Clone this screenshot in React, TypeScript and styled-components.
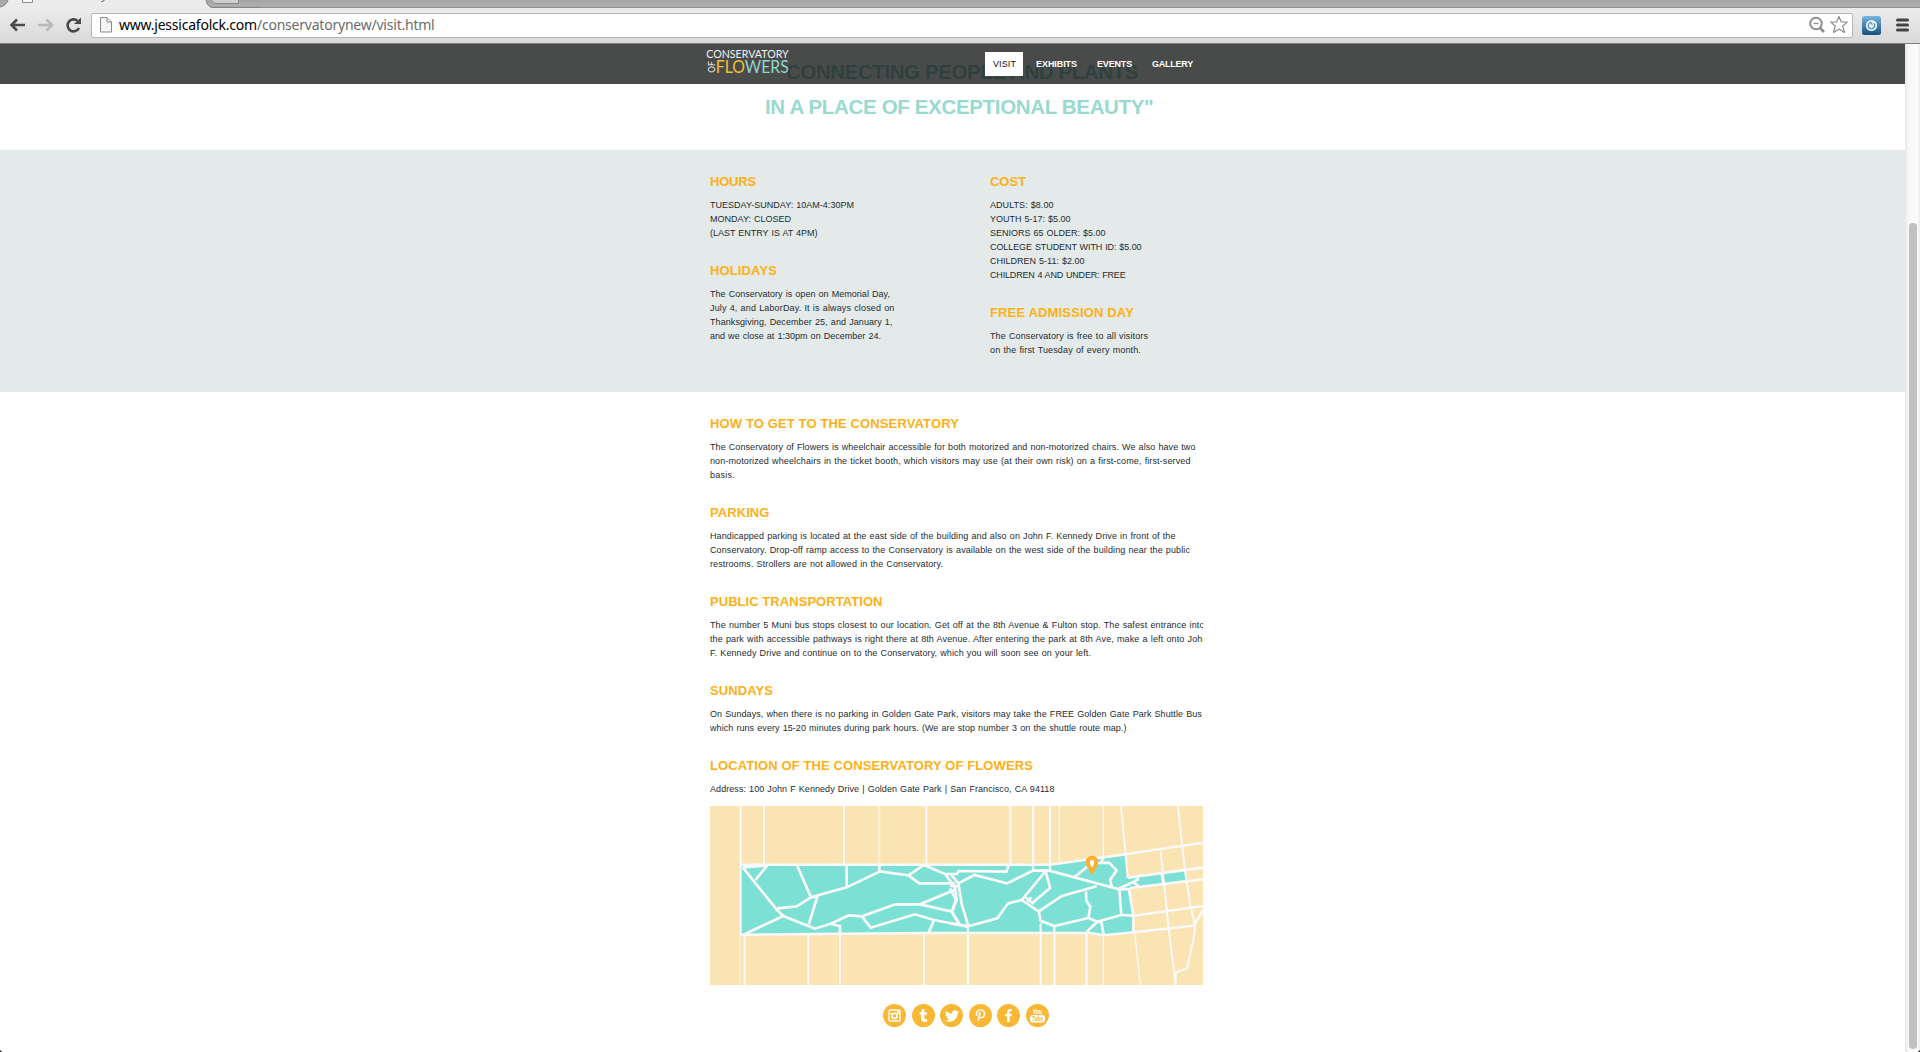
import React, { useLayoutEffect, useRef, useState } from "react";
import styled, { createGlobalStyle } from "styled-components";
import { FaTumblr, FaTwitter, FaPinterestP, FaFacebookF } from "react-icons/fa";

const GlobalStyle = createGlobalStyle`
  html, body { margin: 0; padding: 0; background: #111; overflow: hidden; }
  * { box-sizing: border-box; }
  body { font-family: "Liberation Sans", Arial, sans-serif; }
`;

const Window = styled.div`
  display: flex;
  flex-direction: column;
  width: 1920px;
  height: 1052px;
  overflow: hidden;
  background: #fff;
  border-radius: 0 0 4px 4px;
`;

const TabStrip = styled.div`
  display: flex;
  height: 8px;
  flex: none;
  background: linear-gradient(#a5a5a5, #b0b0b0 80%, #8f8f8f 88%);
`;

const TabArt = styled.svg`
  display: block;
`;

const Toolbar = styled.div`
  display: flex;
  align-items: center;
  height: 36px;
  flex: none;
  padding: 0 11px 1px 9px;
  background: linear-gradient(#ececec, #d9d9d9);
  border-bottom: 1px solid #7b7d7b;
`;

const Nav = styled.svg`
  display: block;
  flex: none;
`;

const AddressBar = styled.div`
  display: flex;
  align-items: center;
  flex: 1;
  height: 25px;
  margin-left: 9px;
  padding: 0 4px 0 8px;
  background: #fff;
  border: 1px solid #b4b4b4;
  border-radius: 2px;
`;

const Url = styled.div`
  flex: 1;
  margin-left: 7px;
  font: 14px/20px "Noto Sans", "Open Sans", sans-serif;
  color: #6b6b6b;
  white-space: nowrap;
`;

const Host = styled.span`
  color: #000;
`;

const Extras = styled.div`
  display: flex;
  align-items: center;
  gap: 15px;
  margin-left: 9px;
`;

const Viewport = styled.div`
  display: flex;
  flex: 1;
  min-height: 0;
`;

const Page = styled.main`
  position: relative;
  width: 1905px;
  overflow: hidden;
  background: #fff;
`;

const ScrollTrack = styled.div`
  width: 15px;
  padding: 179px 3px 3px 4px;
  background: linear-gradient(90deg, #e6e6e6, #f7f7f7 20%, #fcfcfc 80%, #ededed);
`;

const ScrollThumb = styled.div`
  width: 8px;
  height: 826px;
  border-radius: 4px;
  background: #c1c1c1;
`;

const SiteHeader = styled.header`
  position: absolute;
  inset: 0 0 auto 0;
  display: flex;
  height: 40px;
  padding-left: 705px;
  background: rgba(10, 12, 11, 0.74);
`;

const Menu = styled.nav`
  display: flex;
  gap: 20px;
  margin: 8px 0 0 196px;
  height: 24px;
`;

const MenuItem = styled.a<{ $active?: boolean }>`
  padding: ${(p) => (p.$active ? "0 7px 0 8px" : "0")};
  margin-right: ${(p) => (p.$active ? -7 : 0)}px;
  font-size: 9px;
  line-height: 24px;
  font-weight: ${(p) => (p.$active ? 400 : 700)};
  color: ${(p) => (p.$active ? "#111" : "#fff")};
  background: ${(p) => (p.$active ? "#fff" : "transparent")};
`;

const Motto = styled.h1`
  height: 106px;
  margin: 0;
  padding-top: 10px;
  font-size: 20.5px;
  line-height: 35px;
  color: #98d9d0;
`;

const MottoLine = styled.div<{ $indent: number }>`
  padding-left: ${(p) => p.$indent}px;
`;

const Band = styled.section`
  height: 242px;
  background: #e4eae9;
`;

const Container = styled.div`
  display: flex;
  width: 493px;
  margin-left: 710px;
  padding-top: 24px;
`;

const Column = styled.div<{ $w: number }>`
  width: ${(p) => p.$w}px;
  overflow: hidden;
`;

const Title = styled.h3`
  margin: 0 0 8px;
  font-size: 13px;
  line-height: 16px;
  color: #ffb016;
`;

const Copy = styled.p`
  margin: 0 0 23px;
  font-size: 9px;
  line-height: 14px;
  word-spacing: 0.5px;
  color: #1d2c30;
`;

const Address = styled(Copy)`
  margin-bottom: 10px;
`;

const MapArt = styled.svg`
  display: block;
`;

const Social = styled.div`
  display: flex;
  gap: 5.5px;
  margin: 19px 0 0 883px;
`;

const Badge = styled.a`
  display: flex;
  align-items: center;
  justify-content: center;
  width: 23px;
  height: 23px;
  border-radius: 50%;
  background: #fab733;
  color: #fff;
`;

const Row = styled.span`
  display: block;
  white-space: nowrap;
`;

const Measured = styled.span`
  display: inline-block;
  vertical-align: top;
`;

/* Tracks a line of text out (or in) so that it fills the measure it is given. */
function Fit({ width, children }: { width: number; children: React.ReactNode }) {
  const ref = useRef<HTMLSpanElement>(null);
  const [tracking, setTracking] = useState(0);
  useLayoutEffect(() => {
    const el = ref.current;
    if (!el) return;
    const count = (el.textContent ?? "").length;
    setTracking((width - el.getBoundingClientRect().width) / count);
  }, [width]);
  return (
    <Row>
      <Measured ref={ref} style={{ letterSpacing: tracking }}>{children}</Measured>
    </Row>
  );
}

type LineData = [string, number];
interface BlockData {
  title: LineData;
  lines: LineData[];
}

const left: BlockData[] = [
  {
    title: ["HOURS", 46],
    lines: [["TUESDAY-SUNDAY: 10AM-4:30PM", 144], ["MONDAY: CLOSED", 81], ["(LAST ENTRY IS AT 4PM)", 107.5]],
  },
  {
    title: ["HOLIDAYS", 67],
    lines: [
      ["The Conservatory is open on Memorial Day,", 180],
      ["July 4, and LaborDay. It is always closed on", 184.5],
      ["Thanksgiving, December 25, and January 1,", 182.5],
      ["and we close at 1:30pm on December 24.", 171],
    ],
  },
];

const right: BlockData[] = [
  {
    title: ["COST", 36],
    lines: [
      ["ADULTS: $8.00", 63.5],
      ["YOUTH 5-17: $5.00", 80.5],
      ["SENIORS 65 OLDER: $5.00", 115.5],
      ["COLLEGE STUDENT WITH ID: $5.00", 151.5],
      ["CHILDREN 5-11: $2.00", 94.5],
      ["CHILDREN 4 AND UNDER: FREE", 135.5],
    ],
  },
  {
    title: ["FREE ADMISSION DAY", 144],
    lines: [["The Conservatory is free to all visitors", 158], ["on the first Tuesday of every month.", 151]],
  },
];

const directions: BlockData[] = [
  {
    title: ["HOW TO GET TO THE CONSERVATORY", 249],
    lines: [
      ["The Conservatory of Flowers is wheelchair accessible for both motorized and non-motorized chairs. We also have two", 485.5],
      ["non-motorized wheelchairs in the ticket booth, which visitors may use (at their own risk) on a first-come, first-served", 480.5],
      ["basis.", 25],
    ],
  },
  {
    title: ["PARKING", 59.5],
    lines: [
      ["Handicapped parking is located at the east side of the building and also on John F. Kennedy Drive in front of the", 465.5],
      ["Conservatory. Drop-off ramp access to the Conservatory is available on the west side of the building near the public", 480],
      ["restrooms. Strollers are not allowed in the Conservatory.", 233],
    ],
  },
  {
    title: ["PUBLIC TRANSPORTATION", 172.5],
    lines: [
      ["The number 5 Muni bus stops closest to our location. Get off at the 8th Avenue & Fulton stop. The safest entrance into", 494.5],
      ["the park with accessible pathways is right there at 8th Avenue. After entering the park at 8th Ave, make a left onto John", 497.5],
      ["F. Kennedy Drive and continue on to the Conservatory, which you will soon see on your left.", 381],
    ],
  },
  {
    title: ["SUNDAYS", 63],
    lines: [
      ["On Sundays, when there is no parking in Golden Gate Park, visitors may take the FREE Golden Gate Park Shuttle Bus,", 494.5],
      ["which runs every 15-20 minutes during park hours. (We are stop number 3 on the shuttle route map.)", 416.5],
    ],
  },
];

function Block({ title, lines }: BlockData) {
  return (
    <>
      <Title><Fit width={title[1]}>{title[0]}</Fit></Title>
      <Copy>
        {lines.map(([text, width]) => (
          <Fit key={text} width={width}>{text}</Fit>
        ))}
      </Copy>
    </>
  );
}

function Logo() {
  return (
    <svg width="84" height="40" viewBox="0 0 84 40" fontFamily="Lato, sans-serif">
      <text x="1.2" y="14.4" fontSize="10.6" fill="#f2f2f2" textLength="82.5" lengthAdjust="spacingAndGlyphs">CONSERVATORY</text>
      <text transform="translate(9.5 28.8) rotate(-90)" fontSize="10" fill="#f2f2f2" textLength="11.5" lengthAdjust="spacingAndGlyphs">OF</text>
      <text x="10.8" y="28.8" fontSize="16.8" textLength="73" lengthAdjust="spacingAndGlyphs">
        <tspan fill="#f0c030">FLO</tspan><tspan fill="#93d6cc">WERS</tspan>
      </text>
    </svg>
  );
}

function ParkMap() {
  return (
    <MapArt width="493" height="179" viewBox="30 18 1479 537" fill="none" stroke="#fafafa" strokeWidth="8">
      <rect x="30" y="18" width="1479" height="537" fill="#fbe4b4" stroke="none" />
      <path d="M123 195H1048L1275 167L1283 233L1455 213V240L1289 265L1301 395L1212 406L1130 398L682 399L123 403Z" fill="#7ce0d5" stroke="none" />
      <path d="M119 405V555" stroke="#fcefd6" strokeWidth="4" />
      <path d="M122 18V405M192 18V192M432 18V192M679 18V192M134 405V555M325 405V555M420 375V555M672 400V555" strokeWidth="6" />
      <path d="M538 18V192" stroke="#fcf0d8" strokeWidth="6" />
      <path d="M120 194H1050L1275 163L1509 128M120 404L682 399H1170L1212 406L1301 397L1482 377L1509 330" strokeWidth="7.5" />
      <path d="M128 202L202 196L166 240M128 202L232 331L250 348L345 386L392 371L446 346L486 349L586 313H660L765 269M135 402L250 348M232 325L290 319L333 292L291 196M326 373L352 290L333 292L440 262L540 214L625 226L672 195L735 222L765 262L770 300L756 335L780 375M440 262V195M538 195V214M625 226L658 250H765M392 371L420 379V400M486 349L512 383L645 343L702 360L780 375L804 380M702 360L686 398M660 313L756 335" />
      <g transform="translate(750 0)">
        <path d="M181 18V192M249 18V212M300 18V212M54 375V555M272 370V555M313 378V555M410 397V555" strokeWidth="6.5" />
        <path d="M328 18V184M460 18V168M460 405V555M554 397L571 555" strokeWidth="4" />
        <path d="M513 18L527 165L533 233M684 18L705 213L722 320L735 378L733 405L711 505L677 518V555M632 155L656 385L677 555" strokeWidth="6" />
        <path d="M533 233L759 203M540 264L759 238M546 348L759 318" strokeWidth="8" />
        <path d="M-15 222H20L26 213L169 215L177 194M0 220L25 250L35 312L54 375M0 258H25M25 250L73 225L171 250L249 212H298L505 267L566 238M0 265L18 300L5 335L25 370M0 370L54 379L142 355L174 310L215 300L287 213L300 264L247 309L223 289M215 300L266 334L336 288L440 259M408 274L409 302L421 320L415 354L313 378L272 362L266 334M232 305L244 292M415 354L442 365L514 345L550 347L537 267L508 268L514 345M410 395L442 365L454 366L461 405M550 347V397M375 230L425 189L452 189L461 172M452 189L477 188L500 211L481 239L485 260M566 258L550 247L566 235M635 220L640 250" />
        <path d="M426 226L411 200Q403 183 411 174Q426 160 441 174Q449 183 441 200Z" fill="#fbb030" stroke="none" />
        <path d="M426 203L420 192Q418 180 426 179Q434 180 432 192Z" fill="#fff" stroke="none" />
      </g>
    </MapArt>
  );
}

function InstagramGlyph() {
  return (
    <svg width="13" height="13" viewBox="0 0 13 13" fill="none" stroke="#fff">
      <rect x="1" y="1" width="11" height="11" rx="1" strokeWidth="1.4" />
      <circle cx="6.5" cy="6.8" r="2.6" strokeWidth="1.6" />
      <path d="M1 4.5H4M9 4.5H12" />
      <path d="M9 2.8H11" strokeWidth="1.6" />
    </svg>
  );
}

function YouTubeGlyph() {
  return (
    <svg width="19" height="19" viewBox="0 0 19 19" fontFamily="Roboto, sans-serif" fontWeight="700">
      <text x="5" y="7.8" fontSize="8" fill="#fff" textLength="9" lengthAdjust="spacingAndGlyphs">You</text>
      <rect x="2" y="9" width="15" height="7.5" rx="2.5" fill="#fff" />
      <text x="4" y="15.3" fontSize="7" fill="#fab733" textLength="11" lengthAdjust="spacingAndGlyphs">Tube</text>
    </svg>
  );
}

export default function App() {
  return (
    <Window>
      <GlobalStyle />
      <TabStrip>
        <TabArt width="260" height="8" viewBox="0 0 260 8">
          <path d="M0 8V7Q6 6 8 0H206Q207 7 213 8Z" fill="#ececec" />
          <path d="M0 7Q6 6 8 0M206 0Q207 7 213 7.5H260" fill="none" stroke="#848484" />
          <path d="M22.500 0V2.500H32.500V0" fill="#fafafa" stroke="#8a8a8a" />
          <path d="M101.500 1.500Q103.500 2 105 -1" fill="none" stroke="#555" />
          <path d="M211.500 0Q213 3.500 216 3.500H238.500V0" fill="#cfcfcf" stroke="#888" />
        </TabArt>
      </TabStrip>
      <Toolbar>
        <Nav width="73" height="18" viewBox="0 0 73 18" fill="none" strokeWidth="2.600">
          <path d="M16 9H2.500M8 3.500L2.500 9L8 14.500" stroke="#4a4a4a" />
          <path d="M29 9H42.500M37.500 3.500L43 9L37.500 14.500" stroke="#b9b9b9" />
          <path d="M70 12A6 6 0 1 1 68.500 4.800" stroke="#4a4a4a" />
          <path d="M72 1.500V8H65Z" fill="#4a4a4a" />
        </Nav>
        <AddressBar>
          <svg width="12" height="16" viewBox="0 0 12 16" fill="#f4f4f4" stroke="#8a8a8a">
            <path d="M.5 .5H7L11.500 5V15H.5ZM7 .5V5H11.500" />
          </svg>
          <Url><Fit width={315.5}><Host>www.jessicafolck.com</Host>/conservatorynew/visit.html</Fit></Url>
          <svg width="40" height="20" viewBox="0 0 40 20" fill="none" stroke="#8f8f8f">
            <circle cx="8" cy="8.500" r="5.800" strokeWidth="2" />
            <path d="M12 13L16 17" strokeWidth="2.600" />
            <path d="M5.500 8.500H10.500" strokeWidth="1.300" />
            <path d="M31 1.500L33.300 7H39.300L34.700 11L36.500 17.500L31 14L25.500 17.500L27.300 11L22.700 7H28.700Z" strokeWidth="1.200" strokeLinejoin="round" />
          </svg>
        </AddressBar>
        <Extras>
          <svg width="19" height="19" viewBox="0 0 19 19">
            <defs>
              <linearGradient id="ext" x2="0" y2="1">
                <stop stopColor="#77b5e0" />
                <stop offset="1" stopColor="#174f7c" />
              </linearGradient>
            </defs>
            <rect width="19" height="19" rx="2.500" fill="url(#ext)" />
            <circle cx="9.500" cy="9.500" r="5.600" fill="#e8f2f8" />
            <path d="M12 7.500A3.200 3.200 0 1 1 8.500 6.500L10.500 8.500" fill="none" stroke="#4d8db8" strokeWidth="1.200" />
          </svg>
          <svg width="13" height="14" viewBox="0 0 13 14" stroke="#444" strokeWidth="3" strokeLinecap="round">
            <path d="M1.500 2H11.500M1.500 7H11.500M1.500 12H11.500" />
          </svg>
        </Extras>
      </Toolbar>
      <Viewport>
        <Page>
          <Motto>
            <MottoLine $indent={786}><Fit width={352}>CONNECTING PEOPLE AND PLANTS</Fit></MottoLine>
            <MottoLine $indent={765}><Fit width={388.5}>IN A PLACE OF EXCEPTIONAL BEAUTY"</Fit></MottoLine>
          </Motto>
          <Band>
            <Container>
              <Column $w={280}>{left.map((b) => <Block key={b.title[0]} {...b} />)}</Column>
              <Column $w={213}>{right.map((b) => <Block key={b.title[0]} {...b} />)}</Column>
            </Container>
          </Band>
          <Container>
            <Column $w={493}>
              {directions.map((b) => <Block key={b.title[0]} {...b} />)}
              <Title><Fit width={323}>LOCATION OF THE CONSERVATORY OF FLOWERS</Fit></Title>
              <Address>
                <Fit width={344.5}>Address: 100 John F Kennedy Drive | Golden Gate Park | San Francisco, CA 94118</Fit>
              </Address>
              <ParkMap />
            </Column>
          </Container>
          <Social>
            <Badge><InstagramGlyph /></Badge>
            <Badge><FaTumblr size={13} /></Badge>
            <Badge><FaTwitter size={14} /></Badge>
            <Badge><FaPinterestP size={13} /></Badge>
            <Badge><FaFacebookF size={13} /></Badge>
            <Badge><YouTubeGlyph /></Badge>
          </Social>
          <SiteHeader>
            <Logo />
            <Menu>
              <MenuItem $active><Fit width={23}>VISIT</Fit></MenuItem>
              <MenuItem><Fit width={41}>EXHIBITS</Fit></MenuItem>
              <MenuItem><Fit width={35}>EVENTS</Fit></MenuItem>
              <MenuItem><Fit width={41}>GALLERY</Fit></MenuItem>
            </Menu>
          </SiteHeader>
        </Page>
        <ScrollTrack><ScrollThumb /></ScrollTrack>
      </Viewport>
    </Window>
  );
}
